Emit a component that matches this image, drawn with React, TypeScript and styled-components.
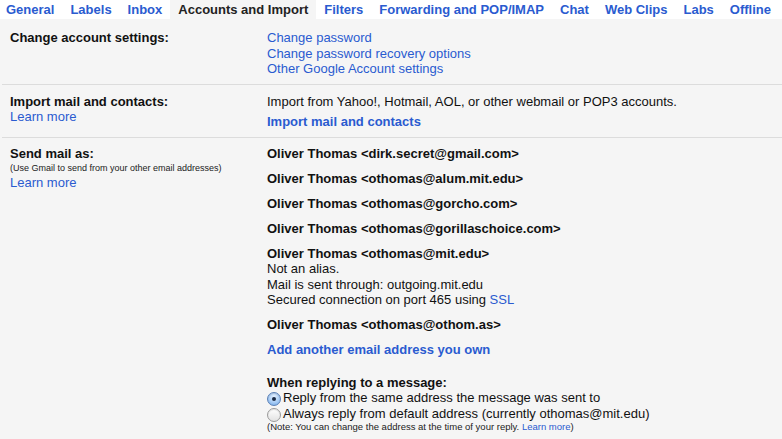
import React from 'react'
import styled, { createGlobalStyle } from 'styled-components'

const GlobalStyle = createGlobalStyle`
  html, body {
    margin: 0;
    background: #f5f5f5;
    font-family: "Liberation Sans", Arial, sans-serif;
    font-size: 13px;
    color: #000;
  }
`

const LINK = '#2a5bd0'

const Page = styled.div`
  width: 782px;
  height: 439px;
  overflow: hidden;
  background: #f5f5f5;
`

const TabBar = styled.div`
  display: flex;
  height: 19px;
  background: #fff;
  margin-left: -2px;
  white-space: nowrap;
`

const Tab = styled.span<{ $active?: boolean }>`
  padding: 0 8px;
  line-height: 19px;
  font-weight: bold;
  color: ${(p) => (p.$active ? '#222' : LINK)};
  background: ${(p) => (p.$active ? '#f5f5f5' : 'transparent')};
  cursor: pointer;
`

const Content = styled.div`
  padding: 2px 0 0 2px;
`

// label column + settings column
const Row = styled.div<{ $last?: boolean; $top?: number }>`
  display: grid;
  grid-template-columns: 257px 1fr;
  padding: ${(p) => p.$top ?? 9}px 0 7px 8px;
  line-height: 15.5px;
  border-bottom: ${(p) => (p.$last ? 'none' : '1px solid #dcdcdc')};
`

const Label = styled.div`
  font-weight: bold;
  color: #111;
`

const Hint = styled.div`
  font-size: 9px;
  line-height: 14px;
  color: #222;
`

const Link = styled.a<{ $bold?: boolean }>`
  display: block;
  color: ${LINK};
  font-weight: ${(p) => (p.$bold ? 'bold' : 'normal')};
  text-decoration: none;
  cursor: pointer;
`

const InlineLink = styled.a`
  color: ${LINK};
  text-decoration: none;
`

const Text = styled.div`
  color: #111;
`

const Spaced = styled.div<{ $top: number }>`
  margin-top: ${(p) => p.$top}px;
`

const Account = styled.div`
  font-weight: bold;
  color: #111;
  margin-bottom: 9.5px;
`

const AccountBlock = styled.div`
  margin-bottom: 9.5px;
  color: #111;
`

const ReplyHeading = styled.div`
  font-weight: bold;
  color: #111;
  margin-top: 17px;
`

const RadioRow = styled.label`
  display: flex;
  align-items: center;
  height: 16px;
  color: #111;
`

const Radio = styled.span<{ $checked?: boolean }>`
  position: relative;
  width: 12px;
  height: 12px;
  margin: 2px 2px 0 0;
  border-radius: 50%;
  border: 1px solid ${(p) => (p.$checked ? '#5a7fb5' : '#9a9a9a')};
  background: ${(p) =>
    p.$checked
      ? 'radial-gradient(circle at 50% 30%, #e4f0ff 0%, #a9cdf5 55%, #6ea6e8 100%)'
      : 'linear-gradient(#ffffff, #e2e2e2)'};
  box-shadow: inset 0 1px 1px rgba(0, 0, 0, 0.12);
  &::after {
    content: '';
    display: ${(p) => (p.$checked ? 'block' : 'none')};
    position: absolute;
    left: 4px;
    top: 4px;
    width: 4px;
    height: 4px;
    border-radius: 50%;
    background: #1b2a44;
  }
`

const Note = styled.div`
  font-size: 9.5px;
  line-height: 10px;
  color: #222;
`

const accounts = [
  'Oliver Thomas <dirk.secret@gmail.com>',
  'Oliver Thomas <othomas@alum.mit.edu>',
  'Oliver Thomas <othomas@gorcho.com>',
  'Oliver Thomas <othomas@gorillaschoice.com>',
]

const tabs = [
  'General',
  'Labels',
  'Inbox',
  'Accounts and Import',
  'Filters',
  'Forwarding and POP/IMAP',
  'Chat',
  'Web Clips',
  'Labs',
  'Offline',
]

export default function App() {
  return (
    <Page>
      <GlobalStyle />
      <TabBar>
        {tabs.map((t) => (
          <Tab key={t} $active={t === 'Accounts and Import'}>
            {t}
          </Tab>
        ))}
      </TabBar>
      <Content>
        <Row>
          <Label>Change account settings:</Label>
          <div>
            <Link>Change password</Link>
            <Link>Change password recovery options</Link>
            <Link>Other Google Account settings</Link>
          </div>
        </Row>
        <Row>
          <div>
            <Label>Import mail and contacts:</Label>
            <Link>Learn more</Link>
          </div>
          <div>
            <Text>Import from Yahoo!, Hotmail, AOL, or other webmail or POP3 accounts.</Text>
            <Spaced $top={5}>
              <Link $bold>Import mail and contacts</Link>
            </Spaced>
          </div>
        </Row>
        <Row $last $top={8}>
          <div>
            <Label>Send mail as:</Label>
            <Hint>(Use Gmail to send from your other email addresses)</Hint>
            <Link>Learn more</Link>
          </div>
          <div>
            {accounts.map((a) => (
              <Account key={a}>{a}</Account>
            ))}
            <AccountBlock>
              <Label>Oliver Thomas &lt;othomas@mit.edu&gt;</Label>
              <Text>Not an alias.</Text>
              <Text>Mail is sent through: outgoing.mit.edu</Text>
              <Text>
                Secured connection on port 465 using <InlineLink>SSL</InlineLink>
              </Text>
            </AccountBlock>
            <Account>Oliver Thomas &lt;othomas@othom.as&gt;</Account>
            <Link $bold>Add another email address you own</Link>
            <ReplyHeading>When replying to a message:</ReplyHeading>
            <RadioRow>
              <Radio $checked />
              Reply from the same address the message was sent to
            </RadioRow>
            <RadioRow>
              <Radio />
              Always reply from default address (currently othomas@mit.edu)
            </RadioRow>
            <Note>
              (Note: You can change the address at the time of your reply.{' '}
              <InlineLink>Learn more</InlineLink>)
            </Note>
          </div>
        </Row>
      </Content>
    </Page>
  )
}
